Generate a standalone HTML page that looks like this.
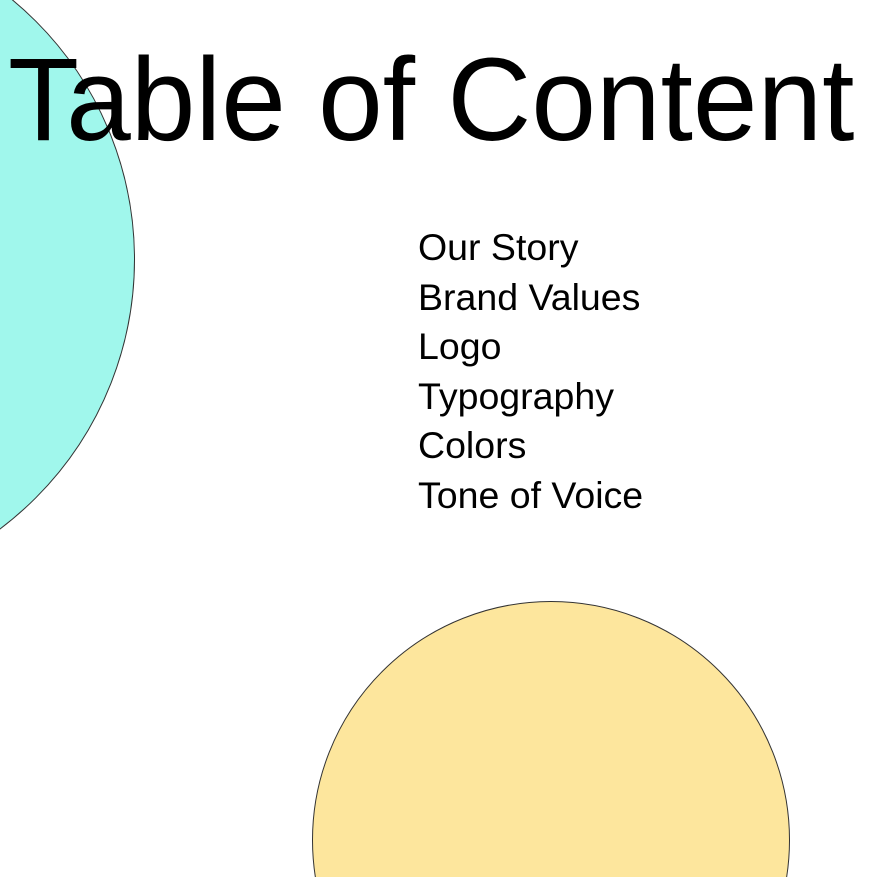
<!DOCTYPE html>
<html><head><style>
html,body{margin:0;padding:0;width:877px;height:877px;overflow:hidden;background:#fff;font-family:"Liberation Sans",sans-serif;}
.wrap{position:relative;width:877px;height:877px;overflow:hidden;}
.c1{position:absolute;left:-540px;top:-78px;width:675px;height:675px;border-radius:50%;background:#a0f7ec;border:1px solid #333;box-sizing:border-box;}
.c2{position:absolute;left:312px;top:601px;width:478px;height:478px;border-radius:50%;background:#fde69d;border:1px solid #333;box-sizing:border-box;}
h1{position:absolute;left:8px;top:35px;margin:0;font-weight:normal;font-size:118px;line-height:130px;color:#000;white-space:nowrap;letter-spacing:0;transform:scaleX(0.985);transform-origin:left;}
.list{position:absolute;left:418px;top:223px;font-size:37.5px;line-height:49.5px;color:#000;letter-spacing:0;}
</style></head><body><div class="wrap">
<div class="c1"></div>
<div class="c2"></div>
<h1>Table of Content</h1>
<div class="list">Our Story<br>Brand Values<br>Logo<br>Typography<br>Colors<br>Tone of Voice</div>
</div></body></html>
